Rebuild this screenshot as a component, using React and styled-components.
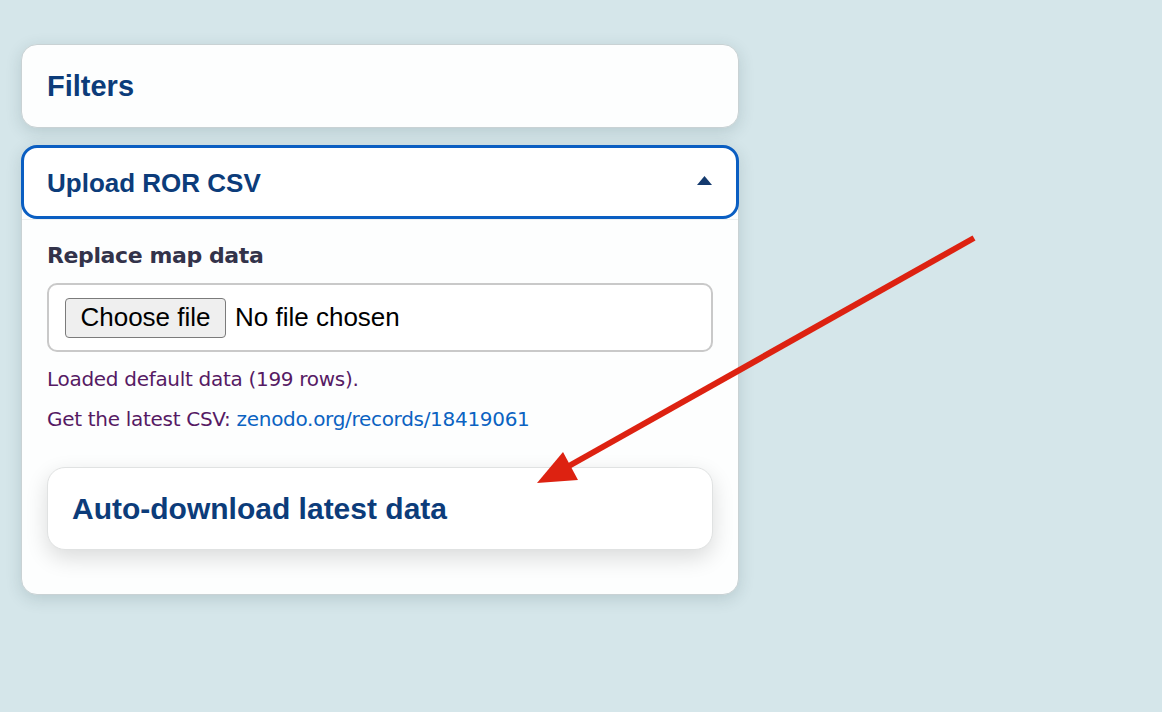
import styled, { createGlobalStyle } from "styled-components";

const GlobalStyle = createGlobalStyle`
  html, body {
    margin: 0;
    padding: 0;
    background: #d5e6ea;
  }
  body {
    font-family: "Liberation Sans", Arial, sans-serif;
  }
`;

const Page = styled.div`
  position: relative;
  width: 1162px;
  height: 712px;
  overflow: hidden;
  padding: 44px 0 0 21px;
  box-sizing: border-box;
`;

const Sidebar = styled.div`
  width: 718px;
  display: flex;
  flex-direction: column;
  gap: 17px;
`;

const Card = styled.section`
  background: #fdfefe;
  border: 1px solid #c9d2d4;
  border-radius: 16px;
  box-shadow: 0 4px 16px rgba(30, 60, 70, 0.16);
`;

const CardTitle = styled.h2`
  margin: 0;
  font-family: "Liberation Sans", Arial, sans-serif;
  font-weight: 700;
  font-size: ${(props) => props.size || 29}px;
  color: #0c3c7a;
`;

const FiltersHead = styled.div`
  height: 82px;
  display: flex;
  align-items: center;
  padding: 0 25px;
`;

const AccordionHead = styled.div`
  height: 66px;
  margin: -1px -1px 0;
  border: 3px solid #0a5ec2;
  border-radius: 16px;
  background: #fff;
  display: flex;
  align-items: center;
  justify-content: space-between;
  padding: 2px 24px 0 23px;
`;

const Caret = styled.svg`
  width: 15px;
  height: 9px;
  margin-top: -6px;
`;

const AccordionBody = styled.div`
  padding: 23px 25px 44px;
  border-top: 1px solid #eef0f0;
`;

const Label = styled.div`
  font-family: "DejaVu Sans", Verdana, sans-serif;
  font-weight: 700;
  font-size: 22px;
  letter-spacing: -0.4px;
  line-height: 26px;
  color: #33334a;
`;

const FileBox = styled.label`
  margin-top: 14px;
  height: 65px;
  border: 2px solid #c9c9c9;
  border-radius: 10px;
  background: #fff;
  display: flex;
  align-items: center;
  gap: 9px;
  padding: 0 16px;
  font-family: "Liberation Sans", Arial, sans-serif;
  font-size: 26px;
  color: #000;
  cursor: pointer;

  input {
    display: none;
  }
`;

const FileButton = styled.span`
  width: 159px;
  height: 38px;
  box-sizing: content-box;
  border: 1px solid #7b7b7b;
  border-radius: 4px;
  background: #efefef;
  display: flex;
  align-items: center;
  justify-content: center;
`;

const Note = styled.p`
  margin: 14px 0 0;
  font-family: "DejaVu Sans", Verdana, sans-serif;
  font-size: 20px;
  letter-spacing: -0.3px;
  line-height: 26px;
  color: #561a64;

  a {
    color: #0b63c2;
    text-decoration: none;
  }
`;

const AutoCard = styled.div`
  margin-top: 35px;
  height: 81px;
  border: 1px solid #e0e2e2;
  border-radius: 18px;
  background: #fff;
  box-shadow: 0 8px 22px rgba(0, 0, 0, 0.14);
  display: flex;
  align-items: center;
  padding: 0 24px;
`;

const Arrow = styled.svg`
  position: absolute;
  left: 0;
  top: 0;
  pointer-events: none;
`;

export default function App() {
  return (
    <>
      <GlobalStyle />
      <Page>
        <Sidebar>
          <Card>
            <FiltersHead>
              <CardTitle size={29}>Filters</CardTitle>
            </FiltersHead>
          </Card>
          <Card>
            <AccordionHead>
              <CardTitle size={26}>Upload ROR CSV</CardTitle>
              <Caret viewBox="0 0 15 9">
                <path d="M7.5 0 L15 9 L0 9 Z" fill="#143a6e" />
              </Caret>
            </AccordionHead>
            <AccordionBody>
              <Label>Replace map data</Label>
              <FileBox>
                <input type="file" accept=".csv" />
                <FileButton>Choose file</FileButton>
                <span>No file chosen</span>
              </FileBox>
              <Note>Loaded default data (199 rows).</Note>
              <Note>
                Get the latest CSV:{" "}
                <a href="#zenodo">zenodo.org/records/18419061</a>
              </Note>
              <AutoCard>
                <CardTitle size={30}>Auto-download latest data</CardTitle>
              </AutoCard>
            </AccordionBody>
          </Card>
        </Sidebar>
        <Arrow width="1162" height="712" viewBox="0 0 1162 712">
          <line x1="974" y1="238" x2="560" y2="471" stroke="#dd2211" strokeWidth="6" />
          <polygon points="537,483 563,452 578,480" fill="#dd2211" />
        </Arrow>
      </Page>
    </>
  );
}
